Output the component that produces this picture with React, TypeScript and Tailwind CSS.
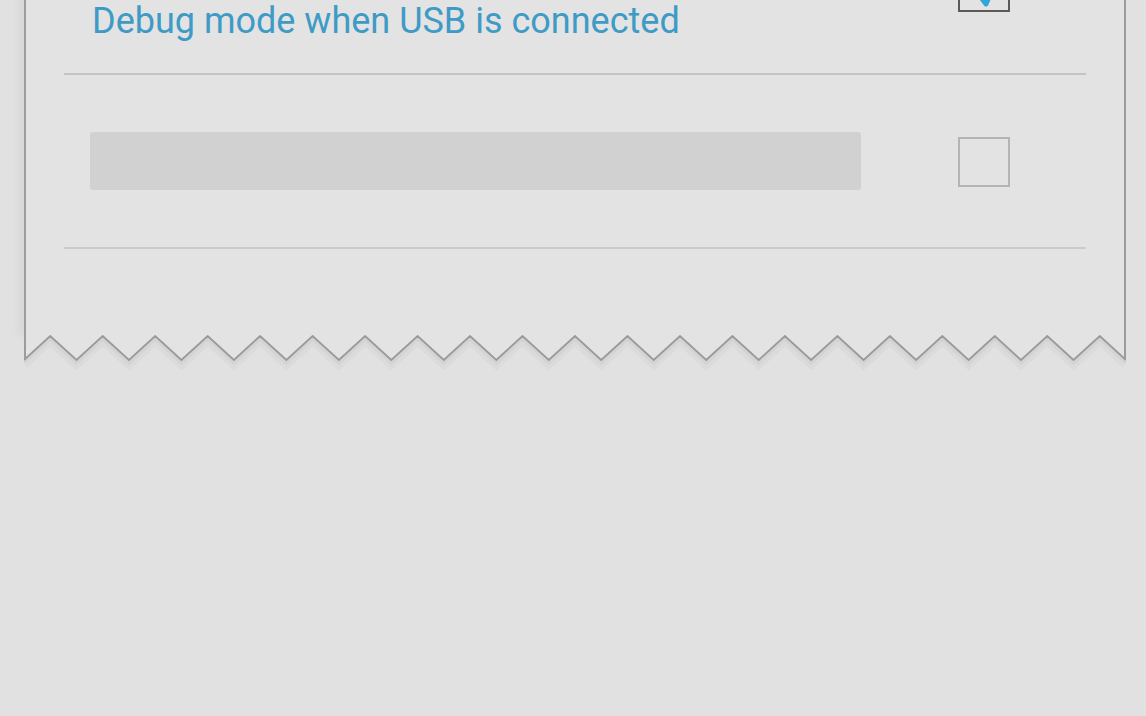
import React from 'react';

const TEETH = 21;
const CARD_W = 1102;
const TOOTH_H = 25;

const zigzagPoints = (dy = 0) => {
  const step = CARD_W / TEETH;
  const pts: string[] = [];
  for (let i = 0; i <= TEETH; i++) {
    pts.push(`${(i * step).toFixed(1)},${TOOTH_H + dy}`);
    if (i < TEETH) pts.push(`${(i * step + step / 2).toFixed(1)},${1 + dy}`);
  }
  return pts.join(' ');
};

const Checkbox = ({ checked }: { checked?: boolean }) => (
  <div
    className={`relative w-[52px] h-[50px] border-2 ${
      checked ? 'border-[#5a5a5a]' : 'border-[#b4b4b4]'
    }`}
  >
    {checked && (
      <svg
        className="absolute left-[6px] -top-[6px] w-[40px] h-[52px]"
        viewBox="0 0 40 52"
      >
        <path
          d="M8 30 L20 46 L38 4"
          fill="none"
          stroke="#33a6d8"
          strokeWidth="5"
          strokeLinecap="round"
          strokeLinejoin="round"
        />
      </svg>
    )}
  </div>
);

const App = () => {
  const pts = zigzagPoints();
  return (
    <div
      className="w-[1146px] h-[716px] overflow-hidden bg-[#e1e1e1]"
      style={{ fontFamily: 'Roboto, "Noto Sans", sans-serif' }}
    >
      <div className="ml-[24px] w-[1102px] -mt-[40px]">
        {/* Card body */}
        <div className="bg-[#e3e3e3] border-x-2 border-[#9c9c9c] pl-[38px] pr-[38px] shadow-[-6px_0_8px_rgba(0,0,0,0.04)]">
          {/* Row 1 (cut off at top) */}
          <div className="h-[113px] flex items-end">
            <div className="flex-1 pl-[28px] pb-[34px]">
              <div className="text-[36px] leading-none text-[#3d9bc6]">
                Debug mode when USB is connected
              </div>
            </div>
            <div className="w-[128px] flex justify-start self-start pt-[2px]">
              <Checkbox checked />
            </div>
          </div>
          <div className="h-[2px] bg-[#c4c4c4]" />

          {/* Row 2 placeholder */}
          <div className="h-[172px] flex items-center">
            <div className="ml-[26px] w-[771px] h-[58px] rounded-[3px] bg-[#d1d1d1]" />
            <div className="ml-[97px] pt-[2px]">
              <Checkbox />
            </div>
          </div>
          <div className="h-[2px] bg-[#cbcbcb]" />

          <div className="h-[87px]" />
        </div>

        {/* Torn zigzag edge */}
        <svg
          className="block w-[1102px] h-[36px] -mt-px"
          viewBox={`0 0 ${CARD_W} 36`}
        >
          <polyline
            points={zigzagPoints(4)}
            fill="none"
            stroke="rgba(0,0,0,0.025)"
            strokeWidth="10"
          />
          <polyline
            points={zigzagPoints(2)}
            fill="none"
            stroke="rgba(0,0,0,0.03)"
            strokeWidth="5"
          />
          <polygon points={`0,0 ${pts} ${CARD_W},0`} fill="#e3e3e3" />
          <polyline points={pts} fill="none" stroke="#9a9a9a" strokeWidth="1.8" />
          <line x1="1" y1="0" x2="1" y2={TOOTH_H} stroke="#9c9c9c" strokeWidth="2" />
          <line
            x1={CARD_W - 1}
            y1="0"
            x2={CARD_W - 1}
            y2={TOOTH_H}
            stroke="#9c9c9c"
            strokeWidth="2"
          />
        </svg>
      </div>
    </div>
  );
};

export default App;
